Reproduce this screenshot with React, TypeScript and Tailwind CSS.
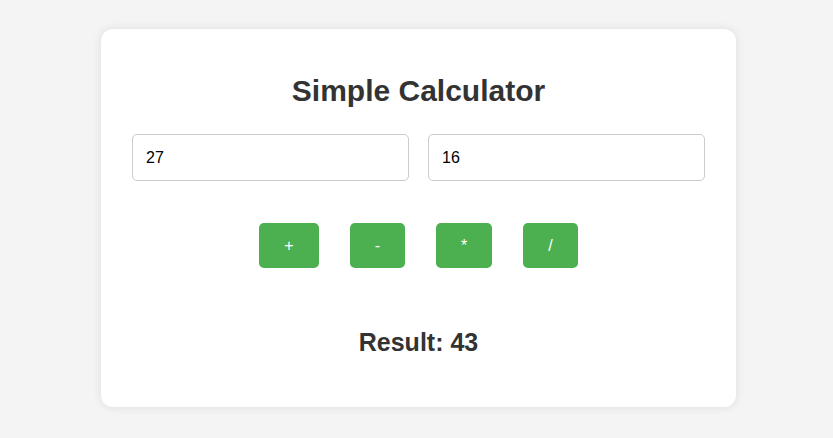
import { useState } from "react";

export default function App() {
  const [a, setA] = useState("27");
  const [b, setB] = useState("16");
  const [result, setResult] = useState<number | string>(43);

  const calc = (op: string) => {
    const x = parseFloat(a);
    const y = parseFloat(b);
    if (isNaN(x) || isNaN(y)) return setResult("Invalid input");
    if (op === "+") setResult(x + y);
    if (op === "-") setResult(x - y);
    if (op === "*") setResult(x * y);
    if (op === "/") setResult(y === 0 ? "Cannot divide by zero" : x / y);
  };

  return (
    <div className="min-h-[438px] bg-[#f4f4f4] pt-[29px] pl-1 flex justify-center items-start font-['Liberation_Sans',Arial,sans-serif]">
      <div className="w-[635px] bg-white rounded-xl shadow-[0_0_10px_rgba(0,0,0,0.1)] px-[31px] pt-[46px] pb-[51px] text-center">
        <h1 className="text-[30px] leading-8 font-bold text-[#333]">Simple Calculator</h1>

        <div className="mt-[27px] flex gap-[19px]">
          <input
            type="number"
            value={a}
            onChange={(e) => setA(e.target.value)}
            className="flex-1 min-w-0 h-[47px] border border-[#ccc] rounded-[5px] px-[13px] text-base text-black outline-none"
          />
          <input
            type="number"
            value={b}
            onChange={(e) => setB(e.target.value)}
            className="flex-1 min-w-0 h-[47px] border border-[#ccc] rounded-[5px] px-[13px] text-base text-black outline-none"
          />
        </div>

        <div className="mt-[42px] flex justify-center gap-[31px]">
          {["+", "-", "*", "/"].map((op) => (
            <button
              key={op}
              onClick={() => calc(op)}
              className="h-[45px] px-[25px] bg-[#4caf50] hover:bg-[#45a049] text-white text-base rounded-[5px] cursor-pointer"
            >
              {op}
            </button>
          ))}
        </div>

        <div className="mt-[60px] text-[25px] leading-7 font-bold text-[#333]">Result: {result}</div>
      </div>
    </div>
  );
}
